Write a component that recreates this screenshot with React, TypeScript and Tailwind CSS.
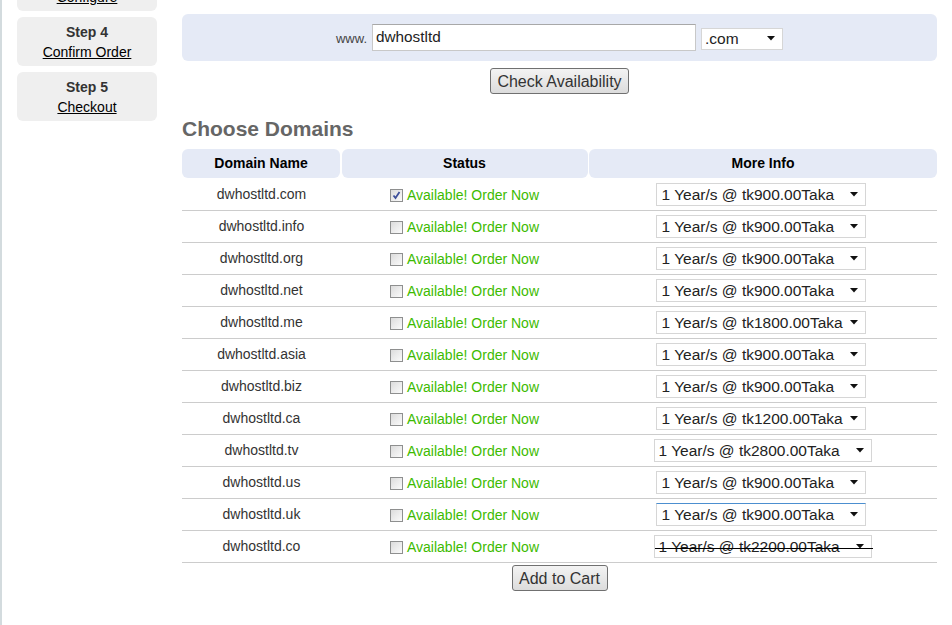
import React from "react";

const domains: { name: string; price: string; checked?: boolean; wide?: boolean; struck?: boolean; focus?: boolean }[] = [
  { name: "dwhostltd.com", price: "tk900.00", checked: true },
  { name: "dwhostltd.info", price: "tk900.00" },
  { name: "dwhostltd.org", price: "tk900.00" },
  { name: "dwhostltd.net", price: "tk900.00" },
  { name: "dwhostltd.me", price: "tk1800.00" },
  { name: "dwhostltd.asia", price: "tk900.00" },
  { name: "dwhostltd.biz", price: "tk900.00" },
  { name: "dwhostltd.ca", price: "tk1200.00" },
  { name: "dwhostltd.tv", price: "tk2800.00", wide: true },
  { name: "dwhostltd.us", price: "tk900.00" },
  { name: "dwhostltd.uk", price: "tk900.00", focus: true },
  { name: "dwhostltd.co", price: "tk2200.00", wide: true, struck: true },
];

const Arrow = () => (
  <svg width="8" height="5" viewBox="0 0 8 5" className="shrink-0">
    <path d="M0 0h8L4 4.5z" fill="#111" />
  </svg>
);

const Checkbox = ({ checked }: { checked?: boolean }) => (
  <span className="relative inline-block w-[13px] h-[13px] border border-[#8e8f8f] bg-gradient-to-br from-[#dcdcdc] to-[#fbfbfb] shrink-0">
    {checked && (
      <svg width="11" height="11" viewBox="0 0 11 11" className="absolute left-0 top-0">
        <path d="M2.5 5.5l2 2.5 4-6" stroke="#3d4f9a" strokeWidth="1.8" fill="none" />
      </svg>
    )}
  </span>
);

const Button = ({ label, w }: { label: string; w: string }) => (
  <div
    className={`${w} h-[26px] pt-[2px] flex items-center justify-center rounded-[3px] border border-[#707070] bg-gradient-to-b from-[#f3f3f3] to-[#dcdcdc] text-[16px] text-[#333]`}
  >
    {label}
  </div>
);

export default function App() {
  return (
    <div className="w-[952px] h-[625px] overflow-hidden bg-white flex font-['Liberation_Sans',Arial,sans-serif]">
      <div className="w-[2px] bg-[#d3dbde] shrink-0" />
      <div className="w-[140px] ml-[15px] shrink-0 flex flex-col gap-[6px]">
        <div className="h-[49px] mt-[-38px] rounded-[6px] bg-[#efefef] flex flex-col items-center justify-center text-[14px]">
          <span className="font-bold text-[#333] leading-[20px]">Step 3</span>
          <span className="underline text-black leading-[20px]">Configure</span>
        </div>
        <div className="h-[49px] rounded-[6px] bg-[#efefef] flex flex-col items-center justify-center text-[14px]">
          <span className="font-bold text-[#333] leading-[20px]">Step 4</span>
          <span className="underline text-black leading-[20px]">Confirm Order</span>
        </div>
        <div className="h-[49px] rounded-[6px] bg-[#efefef] flex flex-col items-center justify-center text-[14px]">
          <span className="font-bold text-[#333] leading-[20px]">Step 5</span>
          <span className="underline text-black leading-[20px]">Checkout</span>
        </div>
      </div>

      <div className="w-[755px] ml-[25px] pt-[14px] flex flex-col">
        <div className="h-[47px] rounded-[6px] bg-[#e5eaf6] flex items-center justify-center">
          <span className="text-[13px] text-[#444] mr-[5px] mt-[2px]">www.</span>
          <div className="w-[324px] h-[27px] bg-white border border-[#c8c8c8] border-t-[#a8a8a8] flex items-center px-[3px] text-[15.3px] text-[#222]">
            dwhostltd
          </div>
          <div className="w-[82px] h-[22px] ml-[5px] mt-[2px] bg-white border border-[#d6d6d6] flex items-center justify-between pl-[3px] pr-[7px] text-[15.5px] text-[#222]">
            .com
            <Arrow />
          </div>
        </div>

        <div className="flex justify-center mt-[7px]">
          <Button label="Check Availability" w="w-[139px]" />
        </div>

        <h2 className="mt-[22px] text-[21px] font-bold text-[#666] leading-[25px]">Choose Domains</h2>

        <div className="mt-[8px] grid grid-cols-[158px_246px_348px] gap-x-[1.5px] h-[29px]">
          {["Domain Name", "Status", "More Info"].map((h) => (
            <div key={h} className="rounded-[6px] bg-[#e5eaf6] flex items-center justify-center text-[14px] font-bold text-black">
              {h}
            </div>
          ))}
        </div>

        <div className="flex flex-col mt-[1px]">
          {domains.map((d) => (
            <div key={d.name} className="h-[32px] border-b border-[#cccccc] grid grid-cols-[159px_247px_349px] items-center text-[14px]">
              <div className="text-center text-[#333]">{d.name}</div>
              <div className="flex items-center justify-center gap-[4px] mt-[2px]">
                <Checkbox checked={d.checked} />
                <span className="text-[#3dbb00]">Available! Order Now</span>
              </div>
              <div className="flex justify-center">
                <div
                  className={`relative ${d.wide ? "w-[218px] pl-[4px]" : "w-[210px] pl-[5px] ml-[-4px]"} h-[23px] bg-white border ${
                    d.focus ? "border-[#d6d6d6] border-t-[#4c8fd0]" : "border-[#d6d6d6]"
                  } flex items-center justify-between pr-[7px] text-[15.5px] text-[#222]`}
                >
                  <span>1 Year/s @ {d.price}Taka</span>
                  <Arrow />
                  {d.struck && <div className="absolute left-0 right-[-2px] top-[12px] h-[1px] bg-black" />}
                </div>
              </div>
            </div>
          ))}
        </div>

        <div className="flex justify-center mt-[2px]">
          <Button label="Add to Cart" w="w-[96px]" />
        </div>
      </div>
    </div>
  );
}
